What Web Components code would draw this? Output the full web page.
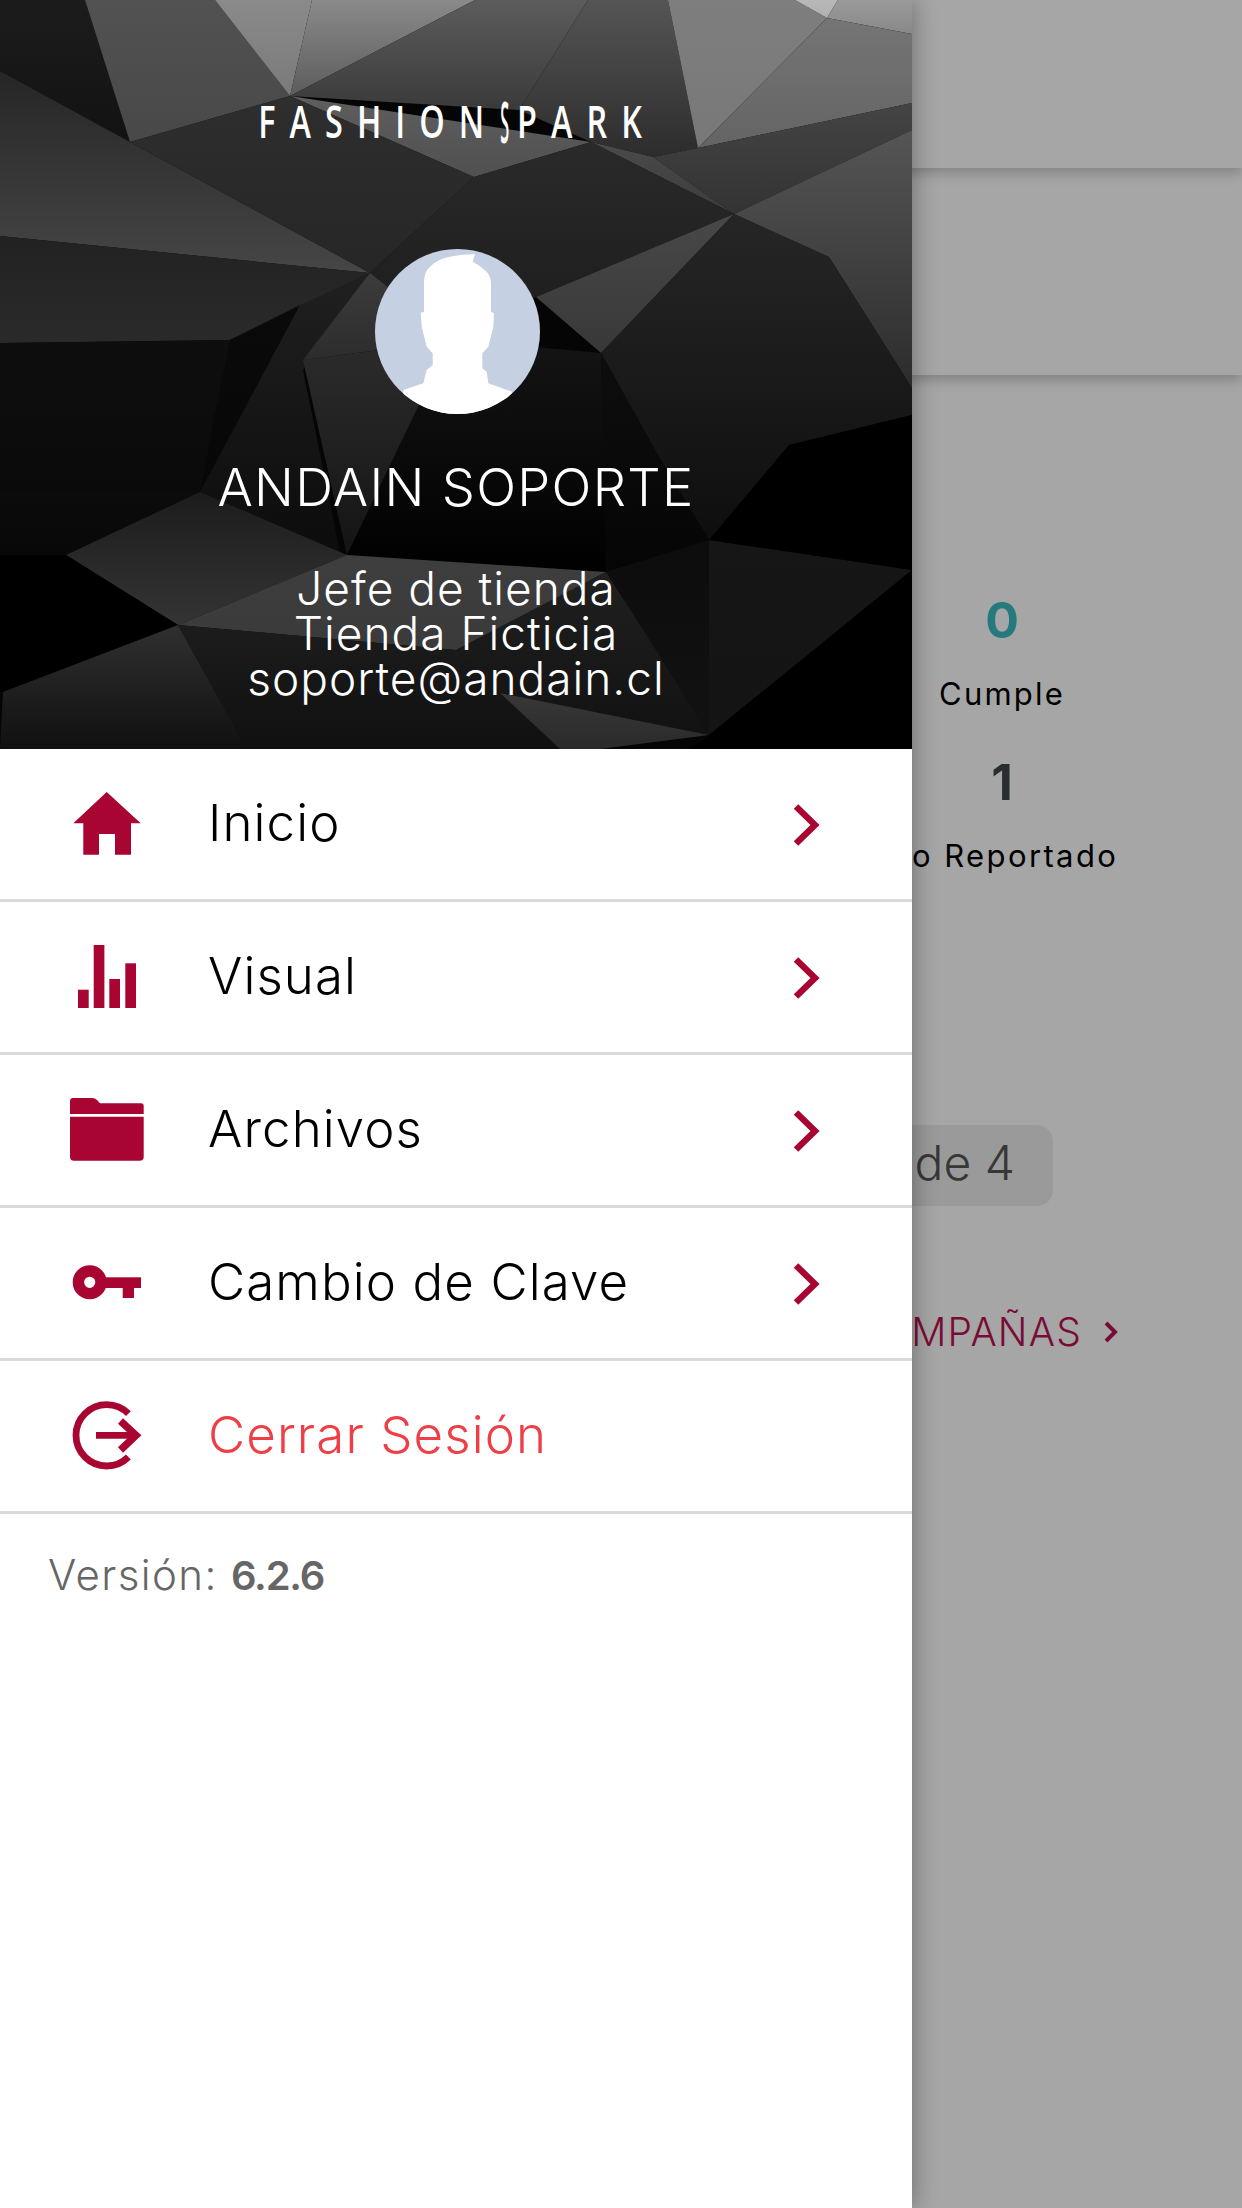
<!DOCTYPE html>
<html lang="es">
<head>
<meta charset="utf-8">
<title>Fashion Park</title>
<style>
  html, body { margin: 0; padding: 0; width: 1242px; height: 2208px; overflow: hidden; background: #fff; }
  body { font-family: Inter, "Open Sans", sans-serif; }
</style>
</head>
<body>
<fp-app>
  <fp-page slot="page"></fp-page>
  <fp-drawer slot="drawer">
    <fp-profile name="ANDAIN SOPORTE">
      <div>Jefe de tienda</div>
      <div>Tienda Ficticia</div>
      <div>soporte@andain.cl</div>
    </fp-profile>
    <fp-menu-item icon="home">Inicio</fp-menu-item>
    <fp-menu-item icon="chart">Visual</fp-menu-item>
    <fp-menu-item icon="folder">Archivos</fp-menu-item>
    <fp-menu-item icon="key">Cambio de Clave</fp-menu-item>
    <fp-menu-item icon="logout" danger>Cerrar Sesión</fp-menu-item>
    <fp-version>6.2.6</fp-version>
  </fp-drawer>
</fp-app>

<script>
  const ICONS = {
    home: `<path d="M36.7 4 3.3 35.3h10v31.4H29V46h16v20.7h16V35.3h9.7z"/>`,
    chart: `<rect x="8" y="48.7" width="10.7" height="18.3"/><rect x="23.7" y="4" width="10.7" height="63"/>
            <rect x="39.3" y="38" width="10.7" height="29"/><rect x="55.3" y="22.3" width="10.7" height="44.7"/>`,
    folder: `<path d="M3 4h19q3 0 5 2l3 3.3h41q2.7 0 2.7 2.7v8H0V7q0-3 3-3z"/>
             <path d="M0 22.7h73.7v40q0 4-4 4H4q-4 0-4-4z"/>`,
    key: `<circle cx="19.7" cy="35.3" r="11.3" fill="none" stroke="#a90533" stroke-width="11.4"/>
          <rect x="32" y="30.3" width="39" height="10.7"/><rect x="52.7" y="35" width="11.3" height="16"/>`,
    logout: `<g fill="none" stroke="#a90533" stroke-width="6.8">
               <path d="M58.4 13.6A30.7 30.7 0 1 0 58.4 57"/>
               <path d="M26 35.3h38" />
               <path d="M50.5 21 66 35.3 50.5 50" stroke-width="7.4"/>
             </g>`,
  };

  // low-poly backdrop of the drawer header: [points, top colour, bottom colour]
  const POLYS = [
    ["0,0 85,0 130,142 0,71", "#1c1c1c", "#121212"],
    ["85,0 215,0 290,96 130,142", "#525252", "#484848"],
    ["215,0 312,0 290,96", "#8a8a8a", "#7a7a7a"],
    ["312,0 475,0 290,96", "#8a8a8a", "#5c5c5c"],
    ["475,0 588,0 519,110 290,96", "#5c5c5c", "#3a3a3a"],
    ["588,0 668,0 698,148 653,157 591,142 519,110", "#555", "#2c2c2c"],
    ["668,0 795,0 827,18 698,148", "#7e7e7e", "#787878"],
    ["795,0 838,0 827,18", "#b8b8b8", "#b0b0b0"],
    ["838,0 912,0 912,34 827,18", "#9a9a9a", "#888"],
    ["827,18 912,34 912,103 698,148", "#757575", "#646464"],
    ["290,96 591,142 474,177", "#5e5e5e", "#505050"],
    ["0,71 130,142 370,273 0,236", "#262626", "#464646"],
    ["130,142 290,96 474,177 370,273", "#2e2e2e", "#262626"],
    ["0,236 370,273 230,340 0,343", "#222", "#2a2a2a"],
    ["698,148 912,103 912,130 734,214 653,157", "#444", "#333"],
    ["591,142 653,157 734,214", "#4a4a4a", "#3c3c3c"],
    ["734,214 912,130 912,388 829,257", "#555", "#2c2c2c"],
    ["474,177 591,142 734,214 536,297 456,340 370,273", "#2a2a2a", "#1c1c1c"],
    ["734,214 536,297 601,353", "#484848", "#383838"],
    ["734,214 829,257 912,388 912,415 789,445 709,540 659,457 601,353", "#262626", "#0e0e0e"],
    ["0,343 230,340 200,492 0,492", "#0e0e0e", "#0a0a0a"],
    ["230,340 300,305 200,492", "#0a0a0a", "#070707"],
    ["300,305 370,273 303,370 340,553 200,492", "#202020", "#0c0c0c"],
    ["370,273 303,360 456,340", "#3c3c3c", "#2c2c2c"],
    ["303,360 456,340 420,403 347,555", "#2c2c2c", "#141414"],
    ["420,403 456,340 601,353 606,572 347,555", "#141414", "#000"],
    ["601,353 659,457 709,540 606,572", "#0e0e0e", "#050505"],
    ["0,492 200,492 66,555 0,555", "#0b0b0b", "#080808"],
    ["66,555 200,492 347,555 178,625", "#1c1c1c", "#343434"],
    ["0,555 66,555 178,625 3,692 0,692", "#000", "#000"],
    ["3,692 178,625 247,749 0,749", "#303030", "#101010"],
    ["178,625 347,555 606,572 456,650", "#3e3e3e", "#3a3a3a"],
    ["456,650 606,572 650,640 709,735 500,693", "#202020", "#121212"],
    ["178,625 456,650 500,693 560,749 247,749", "#1c1c1c", "#101010"],
    ["500,693 709,735 600,749 560,749", "#383838", "#2a2a2a"],
    ["606,572 709,540 709,735 650,640", "#0c0c0c", "#121212"],
    ["709,540 912,570 709,735", "#161616", "#141414"],
    ["789,445 912,415 912,570 709,540", "#000", "#000"],
    ["912,570 709,735 690,749 912,749", "#000", "#000"],
  ];

  class FpApp extends HTMLElement {
    constructor() {
      super();
      const shadow = this.attachShadow({ mode: "open" });
      shadow.innerHTML = `
        <style>
          :host { display: block; position: relative; width: 1242px; height: 2208px; overflow: hidden; }
          .scrim { position: absolute; inset: 0; background: rgba(0,0,0,.35); }
          .drawer { position: absolute; left: 0; top: 0; width: 912px; height: 2208px; }
        </style>
        <slot name="page"></slot>
        <div class="scrim"></div>
        <div class="drawer"><slot name="drawer"></slot></div>`;
    }
  }

  class FpPage extends HTMLElement {
    constructor() {
      super();
      const shadow = this.attachShadow({ mode: "open" });
      shadow.innerHTML = `
        <style>
          :host { display: flex; flex-direction: column; height: 2208px; background: #fff; color: #000; isolation: isolate; }
          .bar { flex: none; box-shadow: 0 5px 12px rgba(0,0,0,.22); background: #fff; position: relative; }
          .bar.one { height: 168px; z-index: 2; }
          .bar.two { height: 207px; z-index: 1; }
          .stats { width: 400px; margin: 215px 0 0 802px; text-align: center; font-size: 31px; font-weight: 400; }
          .num { font-size: 50px; line-height: 60px; font-weight: 700; }
          .teal { color: #3bbcc1; }
          .ink { color: #40484f; }
          .cap { line-height: 40px; margin: 24px 0 38px; white-space: nowrap; letter-spacing: 2.2px; }
          .cap.wide { letter-spacing: 2.4px; padding-right: 11px; }
          .cap.wide span { letter-spacing: 14px; }
          .pager { align-self: flex-start; box-sizing: border-box; width: 400px; height: 81px; margin: 211px 0 0 653px;
                   background: #ededed; border-radius: 16px; padding-right: 38px; text-align: right;
                   font-size: 48px; line-height: 76px; font-weight: 300; color: #555; }
          .link { align-self: flex-start; display: flex; align-items: center; gap: 22px; margin: 101px 0 0 700px;
                  color: #bb1352; font-size: 39px; line-height: 50px; font-weight: 300; white-space: nowrap; letter-spacing: 1.2px; }
          .link span { width: 382px; text-align: right; }
          svg { display: block; }
        </style>
        <div class="bar one"></div>
        <div class="bar two"></div>
        <div class="stats">
          <div class="num teal">0</div>
          <div class="cap">Cumple</div>
          <div class="num ink">1</div>
          <div class="cap wide"><span>N</span>o Reportado</div>
        </div>
        <div class="pager">1 de 4</div>
        <div class="link"><span>CAMPAÑAS</span>
          <svg width="14" height="24" viewBox="0 0 14 24"><path d="M2 3l9 9-9 9" fill="none" stroke="#bb1352" stroke-width="4"/></svg>
        </div>`;
    }
  }

  class FpDrawer extends HTMLElement {
    constructor() {
      super();
      const shadow = this.attachShadow({ mode: "open" });
      shadow.innerHTML = `
        <style>
          :host { display: flex; flex-direction: column; height: 2208px; background: #fff;
                  box-shadow: 2px 0 22px rgba(0,0,0,.32); }
        </style>
        <slot></slot>`;
    }
  }

  class FpProfile extends HTMLElement {
    constructor() {
      super();
      const shadow = this.attachShadow({ mode: "open" });
      const grads = POLYS.map(([, a, b], i) =>
        `<linearGradient id="g${i}" x1="0" y1="0" x2="0" y2="1"><stop offset="0" stop-color="${a}"/><stop offset="1" stop-color="${b}"/></linearGradient>`).join("");
      const polys = POLYS.map(([p], i) => `<polygon points="${p}" fill="url(#g${i})"/>`).join("");
      shadow.innerHTML = `
        <style>
          :host { display: flex; flex-direction: column; align-items: center; position: relative; flex: none;
                  box-sizing: border-box; height: 749px; padding-top: 96px; color: #fff; overflow: hidden; }
          .bg { position: absolute; inset: 0; z-index: 0; }
          .logo, .avatar, .name, .info { position: relative; z-index: 1; }
          .logo { font: 600 45px/50px "Open Sans", sans-serif; letter-spacing: 19.5px; white-space: nowrap;
                  margin-right: -2px; transform: scaleX(.72); }
          .logo b { display: inline-block; font-weight: 600; transform: scale(.5, 1.3); margin: 0 -10px 0 -8px; }
          .avatar { display: block; margin-top: 103px; margin-left: 3px; }
          .name { margin-top: 36px; font-size: 52.5px; line-height: 74px; font-weight: 300; white-space: nowrap; letter-spacing: 1.3px; }
          .info { margin-top: 42px; font-size: 46px; line-height: 45px; font-weight: 300; text-align: center; white-space: nowrap; letter-spacing: 1px; }
        </style>
        <svg class="bg" width="912" height="749" viewBox="0 0 912 749">
          <defs>${grads}</defs>
          <rect width="912" height="749" fill="#050505"/>
          ${polys}
        </svg>
        <div class="logo">FASHION<b>S</b>PARK</div>
        <svg class="avatar" width="165" height="165" viewBox="0 0 165 165">
          <defs><clipPath id="disc"><circle cx="82.5" cy="82.5" r="82.5"/></clipPath></defs>
          <circle cx="82.5" cy="82.5" r="82.5" fill="#c5d0e3"/>
          <path clip-path="url(#disc)" fill="#fff" d="M49 34.3Q49 22 55 17.7 62 10 75 7.7 88 5 100 5.3L97.7 12.7Q106 17 111.7 22.7 116 28 116 34.3V62.7L119 64.3 118.3 77.7 113.3 97.7 107.3 104.3V119.3L111.7 122.7 113.3 134.3 136.7 142.7V165H28.3V141L48.3 134.3 51.7 121 57.7 116V104.3L51.7 97.7 46.7 77.7 45.7 63.7 49 62.7z"/>
        </svg>
        <div class="name">${this.getAttribute("name")}</div>
        <div class="info"><slot></slot></div>`;
    }
  }

  class FpMenuItem extends HTMLElement {
    constructor() {
      super();
      const shadow = this.attachShadow({ mode: "open" });
      const danger = this.hasAttribute("danger");
      shadow.innerHTML = `
        <style>
          :host { display: flex; align-items: center; flex: none; box-sizing: border-box; height: 153px;
                  padding: 0 90px 0 70px; border-bottom: 3px solid #dadada; }
          .label { flex: 1; margin: 0 0 3px 64px; font-size: 51px; font-weight: 300; white-space: nowrap; letter-spacing: 1.1px;
                   color: ${danger ? "#ef3e46" : "#000"}; }
          svg { display: block; flex: none; fill: #a90533; }
          .chev { fill: none; stroke: #a90533; stroke-width: 6.4; }
        </style>
        <svg width="74" height="72" viewBox="0 0 74 72">${ICONS[this.getAttribute("icon")]}</svg>
        <div class="label"><slot></slot></div>
        ${danger ? "" : `<svg class="chev" width="30" height="48" viewBox="0 0 30 48"><path d="M4 6.5 23 25 4 43.5"/></svg>`}`;
    }
  }

  class FpVersion extends HTMLElement {
    constructor() {
      super();
      const shadow = this.attachShadow({ mode: "open" });
      shadow.innerHTML = `
        <style>
          :host { display: block; padding: 31px 0 0 48px; color: #666; font-size: 42px; line-height: 60px; font-weight: 300; letter-spacing: 1.4px; }
          b { font-weight: 600; font-size: 40px; letter-spacing: -1.2px; }
        </style>
        Versión: <b><slot></slot></b>`;
    }
  }

  customElements.define("fp-app", FpApp);
  customElements.define("fp-page", FpPage);
  customElements.define("fp-drawer", FpDrawer);
  customElements.define("fp-profile", FpProfile);
  customElements.define("fp-menu-item", FpMenuItem);
  customElements.define("fp-version", FpVersion);
</script>
</body>
</html>
